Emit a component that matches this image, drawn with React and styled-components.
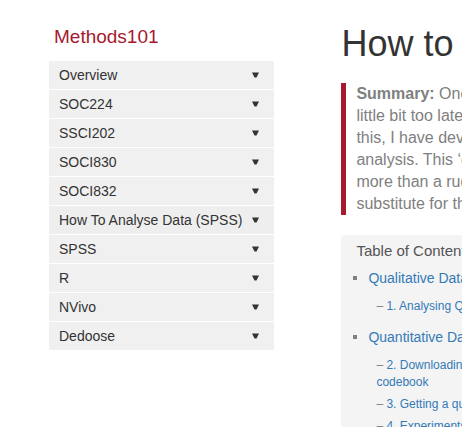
import React from "react";
import styled, { createGlobalStyle } from "styled-components";

const GlobalStyle = createGlobalStyle`
  * { box-sizing: border-box; }
  body {
    margin: 0;
    background: #fff;
    color: #333;
    font-family: "Liberation Sans", Arial, sans-serif;
    font-size: 14px;
  }
`;

const Page = styled.div`
  display: flex;
  align-items: flex-start;
  gap: 67px;
  height: 100vh;
  padding: 24px 0 0 49px;
  overflow: hidden;
`;

const Sidebar = styled.nav`
  flex: 0 0 auto;
`;

const SiteTitle = styled.a`
  display: block;
  padding: 0 5px;
  margin-bottom: 11px;
  color: #a6192e;
  font-size: 19px;
  line-height: 26px;
  text-decoration: none;
`;

const Menu = styled.ul`
  display: grid;
  gap: 1px;
  margin: 0;
  padding: 0;
  list-style: none;
`;

const MenuButton = styled.button`
  display: flex;
  align-items: center;
  justify-content: space-between;
  gap: 10px;
  width: 100%;
  height: 28px;
  padding: 0 15px 0 10px;
  border: 0;
  background: ${({ $current }) => ($current ? "#eeeeee" : "#f0f0f0")};
  color: #333;
  font: inherit;
  line-height: 20px;
  text-align: left;
  white-space: nowrap;
  cursor: pointer;
`;

const Caret = styled.svg`
  flex: none;
  width: 7px;
  height: 6px;
  fill: #333;
`;

const Main = styled.main`
  flex: 1 0 auto;
  white-space: nowrap;
`;

const Heading = styled.h1`
  margin: 0 0 19px;
  font-size: 36px;
  font-weight: 400;
  line-height: 40px;
`;

const Summary = styled.blockquote`
  margin: 0 0 20px;
  padding: 0 10px;
  border-left: 5px solid #a6192e;
  color: #808080;
  font-size: 16px;
  line-height: 22px;
`;

const Contents = styled.section`
  padding: 5px 15px;
  border-radius: 5px;
  background: #f4f4f4;
  color: #808080;
`;

const ContentsTitle = styled.h2`
  margin: 0 0 6px;
  color: #555;
  font-size: 15px;
  font-weight: 400;
  line-height: 22px;
`;

const Topics = styled.ul`
  display: grid;
  gap: 12px;
  margin: 0;
  padding: 0;
  list-style: none;
`;

const Topic = styled.li`
  line-height: 20px;
`;

const TopicRow = styled.div`
  display: flex;
  align-items: center;
  gap: 11px;
  margin-left: -3px;

  &::before {
    content: "";
    width: 4px;
    height: 4px;
    background: #808080;
  }
`;

const Link = styled.a`
  color: #337ab7;
  text-decoration: none;
`;

const Lessons = styled.ol`
  display: grid;
  gap: 5px;
  margin: 10px 0 0;
  padding: 0 0 0 20px;
  list-style: none;
  font-size: 12px;
  line-height: 17px;
`;

const menu = [
  "Overview", "SOC224", "SSCI202", "SOCI830", "SOCI832",
  "How To Analyse Data (SPSS)", "SPSS", "R", "NVivo", "Dedoose",
];

const topics = [
  { title: "Qualitative Data", lessons: [["1. Analysing Qualitative Data"]] },
  {
    title: "Quantitative Data",
    lessons: [
      ["2. Downloading data and", "codebook"],
      ["3. Getting a quick overview"],
      ["4. Experiments"],
    ],
  },
];

const Lines = ({ of }) =>
  of.map((line, i) => (
    <React.Fragment key={line}>
      {i > 0 && <br />}
      {line}
    </React.Fragment>
  ));

export default function App() {
  return (
    <>
      <GlobalStyle />
      <Page>
        <Sidebar aria-label="Site">
          <SiteTitle href="#">Methods101</SiteTitle>
          <Menu>
            {menu.map((label) => (
              <li key={label}>
                <MenuButton type="button" $current={label.startsWith("How")}>
                  {label}
                  <Caret viewBox="0 0 7 6" aria-hidden="true">
                    <path d="M0 0.5H7L4.5 5.5H2.5Z" />
                  </Caret>
                </MenuButton>
              </li>
            ))}
          </Menu>
        </Sidebar>
        <Main>
          <Heading>How to</Heading>
          <Summary>
            <strong>Summary:</strong> One of the things<br />
            little bit too late is<br />
            this, I have developed<br />
            analysis. This ‘cheat<br />
            more than a rudimentary<br />
            substitute for the
          </Summary>
          <Contents>
            <ContentsTitle>Table of Contents</ContentsTitle>
            <Topics>
              {topics.map(({ title, lessons }) => (
                <Topic key={title}>
                  <TopicRow><Link href="#">{title}</Link></TopicRow>
                  <Lessons>
                    {lessons.map((lines) => (
                      <li key={lines[0]}>
                        – <Link href="#"><Lines of={lines} /></Link>
                      </li>
                    ))}
                  </Lessons>
                </Topic>
              ))}
            </Topics>
          </Contents>
        </Main>
      </Page>
    </>
  );
}
